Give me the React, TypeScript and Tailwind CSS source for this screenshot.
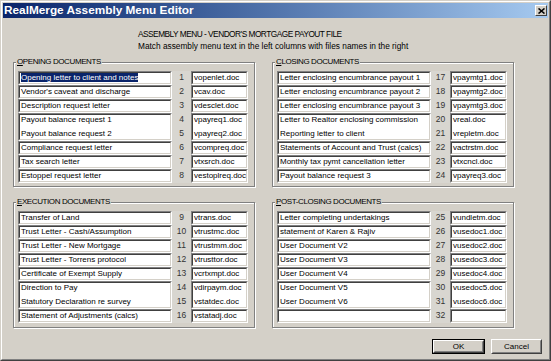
import React from 'react'

interface Entry {
  n: number
  text: string
  file: string
}

// each inner array is one box; two entries share one tall box
const opening: Entry[][] = [
  [{ n: 1, text: 'Opening letter to client and notes', file: 'vopenlet.doc' }],
  [{ n: 2, text: "Vendor's caveat and discharge", file: 'vcav.doc' }],
  [{ n: 3, text: 'Description request letter', file: 'vdesclet.doc' }],
  [
    { n: 4, text: 'Payout balance request 1', file: 'vpayreq1.doc' },
    { n: 5, text: 'Payout balance request 2', file: 'vpayreq2.doc' },
  ],
  [{ n: 6, text: 'Compliance request letter', file: 'vcompreq.doc' }],
  [{ n: 7, text: 'Tax search letter', file: 'vtxsrch.doc' }],
  [{ n: 8, text: 'Estoppel request letter', file: 'vestoplreq.doc' }],
]

const closing: Entry[][] = [
  [{ n: 17, text: 'Letter enclosing encumbrance payout 1', file: 'vpaymtg1.doc' }],
  [{ n: 18, text: 'Letter enclosing encumbrance payout 2', file: 'vpaymtg2.doc' }],
  [{ n: 19, text: 'Letter enclosing encumbrance payout 3', file: 'vpaymtg3.doc' }],
  [
    { n: 20, text: 'Letter to Realtor enclosing commission', file: 'vreal.doc' },
    { n: 21, text: 'Reporting letter to client', file: 'vrepletm.doc' },
  ],
  [{ n: 22, text: 'Statements of Account and Trust (calcs)', file: 'vactrstm.doc' }],
  [{ n: 23, text: 'Monthly tax pymt cancellation letter', file: 'vtxcncl.doc' }],
  [{ n: 24, text: 'Payout balance request 3', file: 'vpayreq3.doc' }],
]

const execution: Entry[][] = [
  [{ n: 9, text: 'Transfer of Land', file: 'vtrans.doc' }],
  [{ n: 10, text: 'Trust Letter - Cash/Assumption', file: 'vtrustmc.doc' }],
  [{ n: 11, text: 'Trust Letter - New Mortgage', file: 'vtrustmm.doc' }],
  [{ n: 12, text: 'Trust Letter - Torrens protocol', file: 'vtrusttor.doc' }],
  [{ n: 13, text: 'Certificate of Exempt Supply', file: 'vcrtxmpt.doc' }],
  [
    { n: 14, text: 'Direction to Pay', file: 'vdirpaym.doc' },
    { n: 15, text: 'Statutory Declaration re survey', file: 'vstatdec.doc' },
  ],
  [{ n: 16, text: 'Statement of Adjustments (calcs)', file: 'vstatadj.doc' }],
]

const postClosing: Entry[][] = [
  [{ n: 25, text: 'Letter completing undertakings', file: 'vundletm.doc' }],
  [{ n: 26, text: 'statement of Karen & Rajiv', file: 'vusedoc1.doc' }],
  [{ n: 27, text: 'User Document V2', file: 'vusedoc2.doc' }],
  [{ n: 28, text: 'User Document V3', file: 'vusedoc3.doc' }],
  [{ n: 29, text: 'User Document V4', file: 'vusedoc4.doc' }],
  [
    { n: 30, text: 'User Document V5', file: 'vusedoc5.doc' },
    { n: 31, text: 'User Document V6', file: 'vusedoc6.doc' },
  ],
  [{ n: 32, text: '', file: '' }],
]

function Sunken({ width, children }: { width: string; children: React.ReactNode }) {
  return (
    <div className={`${width} h-full border border-t-[#808080] border-l-[#808080] border-b-white border-r-white`}>
      <div className="h-full border border-t-[#404040] border-l-[#404040] border-b-[#d4d0c8] border-r-[#d4d0c8] bg-white overflow-hidden">
        <div className="flex flex-col gap-[4px] pl-[1px]">{children}</div>
      </div>
    </div>
  )
}

function Block({ entries }: { entries: Entry[] }) {
  const tall = entries.length === 2
  return (
    <div className={`flex ${tall ? 'h-[28px]' : 'h-[14px]'}`}>
      <Sunken width="w-[154px]">
        {entries.map((e) => (
          <div key={e.n} className="h-[10px] leading-[10px] whitespace-nowrap">
            {e.n === 1 ? <span className="bg-[#0a246a] text-white">{e.text}</span> : e.text}
          </div>
        ))}
      </Sunken>
      <div className="w-[19px] bg-[#d8d6d0] flex flex-col items-center gap-[2px] pt-[1px] text-[#333] text-[8.5px]">
        {entries.map((e) => (
          <div key={e.n} className="h-[12px] leading-[10px]">
            {e.n}
          </div>
        ))}
      </div>
      <Sunken width="w-[57px]">
        {entries.map((e) => (
          <div key={e.n} className="h-[10px] leading-[10px] whitespace-nowrap">
            {e.file}
          </div>
        ))}
      </Sunken>
    </div>
  )
}

function Group({ first, rest, rows, bottom }: { first: string; rest: string; rows: Entry[][]; bottom: string }) {
  return (
    <div className={`relative border border-[#808080] shadow-[inset_1px_1px_0_#fff,1px_1px_0_#fff] pt-[8px] pl-[4px] ${bottom}`}>
      <div className="absolute left-[2px] top-[-7px] bg-[#d4d0c8] px-[1px] leading-[12px] tracking-[-0.4px] whitespace-nowrap">
        <span className="underline underline-offset-[1px]">{first}</span>
        {rest}
      </div>
      <div className="flex flex-col">
        {rows.map((r) => (
          <Block key={r[0].n} entries={r} />
        ))}
      </div>
    </div>
  )
}

function Button({ label, isDefault }: { label: string; isDefault?: boolean }) {
  return (
    <div className={`h-[15px] ${isDefault ? 'w-[53px] border border-black' : 'w-[51px]'}`}>
      <div className="h-full border border-t-white border-l-white border-b-[#404040] border-r-[#404040]">
        <div className="h-full border border-t-[#d4d0c8] border-l-[#d4d0c8] border-b-[#808080] border-r-[#808080] flex items-center justify-center leading-[10px]">
          {label}
        </div>
      </div>
    </div>
  )
}

export default function App() {
  return (
    <div className="w-[551px] h-[361px] bg-[#d4d0c8] border border-t-[#d4d0c8] border-l-[#d4d0c8] border-b-[#404040] border-r-[#404040] font-['Liberation_Sans',Arial,sans-serif] text-[8px] text-black overflow-hidden">
      <div className="h-full border border-t-white border-l-white border-b-[#808080] border-r-[#808080] p-[1px] flex flex-col">
        {/* title bar */}
        <div className="h-[15px] flex items-center justify-between bg-gradient-to-r from-[#0a246a] to-[#a6caf0]">
          <span className="pl-[1px] text-white font-bold text-[11.8px] leading-[15px] whitespace-nowrap">
            RealMerge Assembly Menu Editor
          </span>
          <div className="w-[12px] h-[11px] mr-[1px] bg-[#d4d0c8] border border-t-white border-l-white border-b-[#404040] border-r-[#404040] flex items-center justify-center">
            <svg width="7" height="6" viewBox="0 0 7 6">
              <path d="M0.5 0.5 L6.5 5.5 M6.5 0.5 L0.5 5.5" stroke="#000" strokeWidth="1.6" />
            </svg>
          </div>
        </div>

        {/* header */}
        <div className="mt-[10px] pl-[135px] text-[8.3px] leading-[12px] whitespace-nowrap">
          <div className="tracking-[-0.5px]">ASSEMBLY MENU - VENDOR'S MORTGAGE PAYOUT FILE</div>
          <div>Match assembly menu text in the left columns with files names in the right</div>
        </div>

        {/* groups */}
        <div className="mt-[10px] ml-[10px] grid grid-cols-[242px_242px] gap-x-[17px] gap-y-[15px]">
          <Group first="O" rest="PENING DOCUMENTS" rows={opening} bottom="pb-[3px]" />
          <Group first="C" rest="LOSING DOCUMENTS" rows={closing} bottom="pb-[3px]" />
          <Group first="E" rest="XECUTION DOCUMENTS" rows={execution} bottom="pb-[4px]" />
          <Group first="P" rest="OST-CLOSING DOCUMENTS" rows={postClosing} bottom="pb-[4px]" />
        </div>

        {/* buttons */}
        <div className="mt-[11px] flex justify-end gap-[6px] pr-[6px]">
          <Button label="OK" isDefault />
          <Button label="Cancel" />
        </div>
      </div>
    </div>
  )
}
